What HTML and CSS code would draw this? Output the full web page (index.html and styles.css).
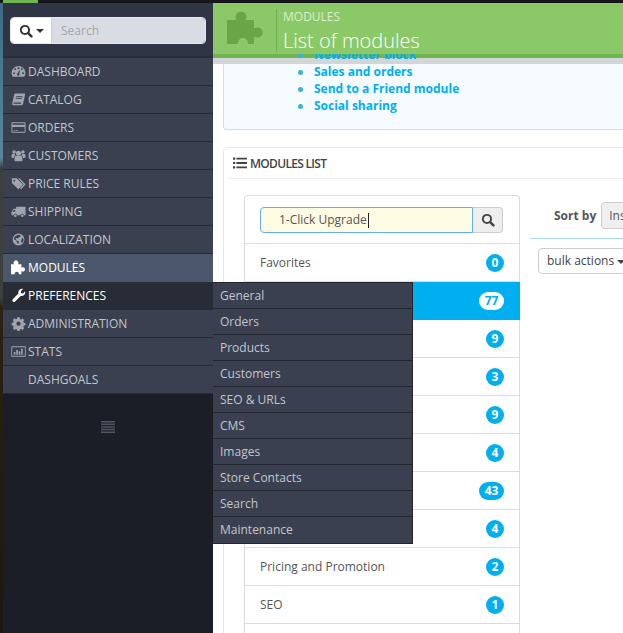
FILE: index.html
```html
<!DOCTYPE html>
<html lang="en">
<head>
    <meta charset="UTF-8">
    <meta name="viewport" content="width=device-width, initial-scale=1.0">
    <title>List of modules</title>
    <link rel="stylesheet" href="styles.css">
</head>
<body>
    <div class="topbar"><div class="topbar-green"></div></div>
    <div class="page">
        <div class="edge"></div>

        <nav class="sidebar">
            <div class="search-block">
                <div class="search-group">
                    <button class="search-type">
                        <svg class="search-icon" viewBox="0 0 16 16"><circle cx="6.8" cy="6.8" r="4.7" fill="none" stroke="currentColor" stroke-width="2.2"/><path d="M10.2 10.2l4 4" stroke="currentColor" stroke-width="2.8" stroke-linecap="round"/></svg>
                        <span class="caret"></span>
                    </button>
                    <div class="search-input">Search</div>
                </div>
            </div>

            <ul class="menu">
                <li class="menu-item">
                    <svg class="menu-icon" viewBox="0 0 16 16"><path fill-rule="evenodd" d="M8 2a7.4 7.4 0 0 0-7.4 7.4c0 1.5.4 2.9 1.2 4.1h12.4c.8-1.2 1.2-2.6 1.2-4.1A7.4 7.4 0 0 0 8 2zM7 3.6h2v1.8H7zM3.2 5.4l1.3-1.2 1.2 1.3-1.2 1.2zM2.2 9h1.9v1.7H2.2zM11.9 9h1.9v1.7h-1.9zM10.4 5.4l1.3-1.3 1.1 1.2-1.2 1.3zM7.2 9.8l1.6-3.2.8.3-.8 3.3a1.4 1.4 0 1 1-1.6-.4z"/></svg>
                    Dashboard
                </li>
                <li class="menu-item">
                    <svg class="menu-icon" viewBox="0 0 16 16"><path fill-rule="evenodd" d="M5 1.5h9.500c.5 0 .7.4.6.9l-2.200 10c-.2.9-.8 1.600-1.800 1.600H2.500C1.500 14 1 13.200 1.200 12.200L3.400 2.800C3.600 2 4.200 1.500 5 1.500zM5.600 4.200l-.2.9h6.800l.2-.9zM5.100 6.200l-.2.900h6.800l.2-.9zM3.200 11.300c-.4 0-.6.300-.6.600s.2.600.6.600h7.300l.3-1.200z"/></svg>
                    Catalog
                </li>
                <li class="menu-item">
                    <svg class="menu-icon" viewBox="0 0 16 16"><path fill-rule="evenodd" d="M1.200 2.500h13.600c.4 0 .7.300.7.700v9.600c0 .4-.3.700-.7.700H1.200a.7.700 0 0 1-.7-.7V3.200c0-.4.300-.7.700-.7zM1.500 3.500v1.600h13V3.500zM1.500 7.400v5.100h13V7.400zM2.800 10.700h2v.8h-2zM5.500 10.700h1.800v.8H5.500z"/></svg>
                    Orders
                </li>
                <li class="menu-item">
                    <svg class="menu-icon" viewBox="0 0 16 16"><circle cx="8" cy="5.500" r="2.700"/><circle cx="3.300" cy="4.300" r="1.900"/><circle cx="12.700" cy="4.300" r="1.900"/><path d="M3.800 13.800V10.400c0-1.300.8-2.200 2-2.200h4.400c1.200 0 2 .9 2 2.200v3.400c-1 .6-7.400.6-8.400 0z"/><path d="M.6 10.500V8c0-1 .6-1.600 1.500-1.600h1.700c.3.700.7 1.200 1.200 1.500-1.100.3-1.900 1.200-2 2.800zM15.400 10.500V8c0-1-.6-1.600-1.500-1.600h-1.700c-.3.700-.7 1.200-1.200 1.500 1.100.3 1.900 1.200 2 2.800z"/></svg>
                    Customers
                </li>
                <li class="menu-item">
                    <svg class="menu-icon" viewBox="0 0 16 16"><path fill-rule="evenodd" d="M1 2.500h5.200L12.800 9l-5 5L1 7.500zM3.500 4a1 1 0 1 0 0 2 1 1 0 0 0 0-2z"/><path d="M7.800 2.500h1.500L15.500 9l-4.800 5-1.100-1.100L13.500 9z"/></svg>
                    Price rules
                </li>
                <li class="menu-item">
                    <svg class="menu-icon" viewBox="0 0 16 16"><path fill-rule="evenodd" d="M5.500 3h9.300c.4 0 .7.300.7.700V12h-1.700a2 2 0 0 0-3.900 0H6.600a2 2 0 0 0-3.900 0H1.200a.7.700 0 0 1-.7-.7V8.500l2-3.100c.2-.3.500-.4.800-.4h2.200zM2.800 6.300L1.800 8.200h2.700V6.300z"/><circle cx="4.600" cy="12.500" r="1.400"/><circle cx="12" cy="12.500" r="1.400"/></svg>
                    Shipping
                </li>
                <li class="menu-item">
                    <svg class="menu-icon" viewBox="0 0 16 16"><path fill-rule="evenodd" d="M8 1.700a6.300 6.300 0 1 0 0 12.600A6.300 6.300 0 0 0 8 1.700zM6 3.400l2.600-.5 1.800 1-.6 1.500-1.700.4-.4 1.200-1.700-.7-1.300.8 1.600 2.500 2.100.3-.3 2.500-1.400-.3-1.300-3L3 7.600c.4-2 1.400-3.400 3-4.200zM11.700 6.500l1.400.5.400 1.800-.8 2-1.300.8-.6-2.100.4-1.300z"/></svg>
                    Localization
                </li>
                <li class="menu-item is-active">
                    <svg class="menu-icon" viewBox="2 2 36 36"><path d="M0 12H11V13.500A5.500 5.500 0 1 1 17 13.500V12H27V20H28.500A5 5 0 1 1 28.500 29H27V36H21V35A5 5 0 0 0 11 35V36H0Z"/></svg>
                    Modules
                </li>
                <li class="menu-item is-open">
                    <svg class="menu-icon" viewBox="0 0 16 16"><path d="M14.900 3.400c.5 1.400.2 3-.9 4-1 1-2.400 1.300-3.700 1L4.400 14.300a1.700 1.700 0 0 1-2.500-2.400l6-6C7.500 4.500 7.900 3 8.900 2c1.100-1 2.600-1.400 4-.9L10.500 3.500l.4 2 2 .4z"/></svg>
                    Preferences
                    <ul class="submenu">
                        <li class="submenu-item">General</li>
                        <li class="submenu-item">Orders</li>
                        <li class="submenu-item">Products</li>
                        <li class="submenu-item">Customers</li>
                        <li class="submenu-item">SEO &amp; URLs</li>
                        <li class="submenu-item">CMS</li>
                        <li class="submenu-item">Images</li>
                        <li class="submenu-item">Store Contacts</li>
                        <li class="submenu-item">Search</li>
                        <li class="submenu-item">Maintenance</li>
                    </ul>
                </li>
                <li class="menu-item">
                    <svg class="menu-icon" viewBox="0 0 16 16"><path fill-rule="evenodd" d="M6.800 1.800h2.400l.4 1.800 1.200.5 1.600-1 1.700 1.700-1 1.600.5 1.200 1.800.4v2.400l-1.800.4-.5 1.200 1 1.600-1.700 1.700-1.600-1-1.200.5-.4 1.800H6.800l-.4-1.800-1.200-.5-1.600 1-1.700-1.700 1-1.600-.5-1.200-1.800-.4V7.900l1.800-.4.5-1.200-1-1.600 1.700-1.700 1.600 1 1.200-.5zM8 6.400a2.300 2.300 0 1 0 0 4.600 2.300 2.300 0 0 0 0-4.600z" transform="translate(0 -.5)"/></svg>
                    Administration
                </li>
                <li class="menu-item">
                    <svg class="menu-icon" viewBox="0 0 16 16"><path fill-rule="evenodd" d="M1 2.500h14c.4 0 .7.300.7.700v9.600c0 .4-.3.700-.7.700H1a.7.700 0 0 1-.7-.7V3.200c0-.4.300-.7.700-.7zM1.200 3.400v9.200h13.600V3.400zM3 8.500h1.700v3H3zM5.600 6.500h1.700v5H5.600zM8.200 7.800h1.700v3.700H8.200zM10.800 5h1.700v6.500h-1.700z"/></svg>
                    Stats
                </li>
                <li class="menu-item">
                    <span class="menu-icon"></span>
                    Dashgoals
                </li>
            </ul>

            <div class="sidebar-foot">
                <svg class="collapse-icon" viewBox="0 0 14 12"><path d="M0 0h14v1.500H0zM0 2.600h14v1.500H0zM0 5.200h14v1.500H0zM0 7.800h14v1.500H0zM0 10.400h14v1.500H0z"/></svg>
            </div>
        </nav>

        <main class="main">
            <header class="title-bar">
                <svg class="title-icon" viewBox="0 0 40 40"><path d="M0 12H11V13.500A5.500 5.500 0 1 1 17 13.500V12H27V20H28.500A5 5 0 1 1 28.500 29H27V36H21V35A5 5 0 0 0 11 35V36H0Z"/></svg>
                <div class="title-text">
                    <div class="breadcrumb">MODULES</div>
                    <h1 class="page-title">List of modules</h1>
                </div>
            </header>
            <div class="title-shadow"></div>

            <div class="content">
                <div class="info-panel">
                    <ul class="info-list">
                        <li>Newsletter block</li>
                        <li>Sales and orders</li>
                        <li>Send to a Friend module</li>
                        <li>Social sharing</li>
                    </ul>
                </div>

                <section class="panel">
                    <h3 class="panel-heading">
                        <svg class="list-icon" viewBox="0 0 14 12"><path d="M0 .500h2.200v2.200H0zM0 4.900h2.200v2.200H0zM0 9.300h2.200v2.200H0zM3.400 .700H14v1.800H3.400zM3.400 5.100H14v1.800H3.400zM3.400 9.500H14v1.800H3.400z"/></svg>
                        Modules list
                    </h3>
                    <div class="panel-body">
                        <div class="categories">
                            <div class="filter-row">
                                <div class="filter-input">1-Click Upgrade<span class="cursor"></span></div>
                                <button class="filter-button">
                                    <svg class="filter-icon" viewBox="0 0 16 16"><circle cx="6.800" cy="6.800" r="4.700" fill="none" stroke="currentColor" stroke-width="2.200"/><path d="M10.200 10.200l4 4" stroke="currentColor" stroke-width="2.800" stroke-linecap="round"/></svg>
                                </button>
                            </div>
                            <div class="category"><span>Favorites</span><span class="badge">0</span></div>
                            <div class="category is-selected"><span class="badge badge-wide">77</span></div>
                            <div class="category"><span class="badge">9</span></div>
                            <div class="category"><span class="badge">3</span></div>
                            <div class="category"><span class="badge">9</span></div>
                            <div class="category"><span class="badge">4</span></div>
                            <div class="category"><span class="badge badge-wide">43</span></div>
                            <div class="category"><span class="badge">4</span></div>
                            <div class="category"><span>Pricing and Promotion</span><span class="badge">2</span></div>
                            <div class="category"><span>SEO</span><span class="badge">1</span></div>
                            <div class="category"></div>
                        </div>

                        <div class="module-list">
                            <div class="sort-row">
                                <span class="sort-label">Sort by</span>
                                <div class="sort-select">Installed</div>
                            </div>
                            <div class="bulk-button">bulk actions <span class="caret"></span></div>
                        </div>
                    </div>
                </section>
            </div>
        </main>
    </div>
</body>
</html>
```

FILE: styles.css
```css
* {
    box-sizing: border-box;
}
html, body {
    height: 100%;
}
body {
    display: flex;
    flex-direction: column;
    margin: 0;
    overflow: hidden;
    font-family: 'Open Sans', sans-serif;
    font-size: 12px;
    color: #555;
    background: #fff;
}
ul {
    list-style: none;
    margin: 0;
    padding: 0;
}
button {
    border: none;
    padding: 0;
    font: inherit;
}
.caret {
    display: inline-block;
    width: 0;
    height: 0;
    border-left: 4px solid transparent;
    border-right: 4px solid transparent;
    border-top: 4px solid currentColor;
    vertical-align: middle;
}

/* top of the window */
.topbar {
    flex: 0 0 3px;
    background: #15161a;
    padding-left: 3px;
}
.topbar-green {
    width: 35px;
    height: 3px;
    background: #6fb551;
}
.page {
    display: flex;
    flex: 1;
    min-height: 0;
}
.edge {
    flex: 0 0 3px;
    background: linear-gradient(to bottom, #3d6c84 0, #5a8797 155px, #3b403e 165px, #3b403e 295px, #2b2414 305px, #1a170f 100%);
}

/* sidebar */
.sidebar {
    display: flex;
    flex-direction: column;
    flex: 0 0 210px;
    background: #1b1e27;
}
.search-block {
    height: 55px;
    padding: 14px 7px 0;
    background: #2f3544;
    border-bottom: 2px solid #282d39;
}
.search-group {
    display: flex;
    height: 27px;
    border-radius: 4px;
    overflow: hidden;
    border: 1px solid #e4e6e9;
}
.search-type {
    display: flex;
    align-items: center;
    gap: 3px;
    width: 41px;
    padding-left: 8px;
    background: #fff;
    color: #333;
    border-right: 1px solid #ccd0d6;
}
.search-icon {
    width: 14px;
    height: 14px;
}
.search-input {
    flex: 1;
    padding-left: 9px;
    line-height: 25px;
    background: #d9dde3;
    color: #a2a6ad;
}
.menu-item {
    position: relative;
    display: flex;
    align-items: center;
    gap: 2px;
    height: 28px;
    padding-left: 8px;
    background: #3a4050;
    border-bottom: 1px solid #262b37;
    color: #c3c6cc;
    text-transform: uppercase;
}
.menu-icon {
    flex: 0 0 15px;
    width: 15px;
    height: 15px;
    fill: #a0a4ac;
}
.menu-item.is-active {
    background: #4b586c;
    color: #fff;
    border-bottom-color: #4b586c;
}
.menu-item.is-open {
    background: #282c37;
    color: #fff;
    border-bottom-color: #282c37;
}
.is-active .menu-icon,
.is-open .menu-icon {
    fill: #fff;
}
.submenu {
    position: absolute;
    top: 0;
    left: 100%;
    z-index: 5;
    width: 200px;
    background: #3a4050;
    border: 1px solid #22262f;
    border-left: none;
    text-transform: none;
}
.submenu-item {
    height: 26px;
    padding-left: 7px;
    line-height: 25px;
    color: #c3c6cc;
    border-bottom: 1px solid #22262f;
}
.submenu-item:last-child {
    border-bottom: none;
}
.sidebar-foot {
    flex: 1;
    padding-top: 26px;
    text-align: center;
}
.collapse-icon {
    width: 14px;
    height: 12px;
    fill: #4e5563;
}

/* green title */
.main {
    flex: 1;
    min-width: 0;
    overflow: hidden;
}
.title-bar {
    position: relative;
    z-index: 2;
    display: flex;
    height: 51px;
    padding-left: 14px;
    background: #8bc968;
}
.title-icon {
    flex: 0 0 40px;
    width: 40px;
    height: 40px;
    margin-top: 5px;
    fill: #6aa548;
}
.title-text {
    margin: 6px 0 0 9px;
    padding-left: 6px;
    border-left: 1px solid #71ae52;
    height: 42px;
}
.breadcrumb {
    font-size: 12px;
    line-height: 16px;
    color: #d9eecb;
}
.page-title {
    margin: 2px 0 0;
    font-size: 20px;
    font-weight: 300;
    line-height: 28px;
    color: #fff;
}
.title-shadow {
    height: 10px;
    background: linear-gradient(to bottom, #71b452 4px, #d3d5d7 4px);
}

/* info box under the title */
.content {
    padding-left: 10px;
    width: 620px;
}
.info-panel {
    display: flow-root;
    height: 66px;
    background: #f5fbff;
    border: 1px solid #c3e3f2;
    border-top: none;
    border-radius: 0 0 0 4px;
}
.info-list {
    position: relative;
    margin-top: -18px;
    padding-left: 90px;
    font-size: 12px;
    font-weight: 700;
    line-height: 17px;
    color: #00aff0;
}
.info-list li::before {
    content: "";
    display: inline-block;
    width: 5px;
    height: 5px;
    margin: 0 11px 0 -16px;
    border-radius: 50%;
    background: #35b3d8;
    vertical-align: middle;
}

/* modules panel */
.panel {
    margin-top: 17px;
    border: 1px solid #e4e6e8;
    border-radius: 5px 0 0 0;
    background: #fff;
}
.panel-heading {
    display: flex;
    align-items: center;
    gap: 3px;
    height: 31px;
    margin: 0 0 0 4px;
    padding-left: 5px;
    font-size: 12px;
    font-weight: 600;
    letter-spacing: -0.7px;
    text-transform: uppercase;
    color: #444;
    border-bottom: 1px solid #eee;
}
.list-icon {
    width: 14px;
    height: 12px;
    fill: #444;
}
.panel-body {
    display: flex;
    padding: 16px 0 0 20px;
}
.categories {
    flex: 0 0 276px;
    border: 1px solid #dcdcdc;
    border-bottom: none;
    border-radius: 4px 4px 0 0;
}
.filter-row {
    display: flex;
    height: 48px;
    padding: 11px 16px 0 15px;
    border-bottom: 1px solid #dcdcdc;
}
.filter-input {
    flex: 1;
    height: 26px;
    padding-left: 18px;
    line-height: 24px;
    background: #fdfbe3;
    border: 1px solid #66afe9;
    border-radius: 4px 0 0 4px;
    color: #555;
}
.cursor {
    display: inline-block;
    width: 1px;
    height: 15px;
    margin-left: 1px;
    background: #222;
    vertical-align: middle;
}
.filter-button {
    flex: 0 0 30px;
    height: 26px;
    background: #eee;
    border: 1px solid #ccc;
    border-left: none;
    border-radius: 0 4px 4px 0;
    color: #444;
}
.filter-icon {
    display: block;
    width: 14px;
    height: 14px;
    margin: 0 auto;
}
.category {
    display: flex;
    align-items: center;
    justify-content: space-between;
    height: 38px;
    padding: 0 15px;
    border-bottom: 1px solid #dcdcdc;
    color: #555;
}
.category.is-selected {
    margin: 0 -1px;
    padding: 0 16px;
    justify-content: flex-end;
    background: #00aff0;
    border-bottom-color: #00aff0;
}
.category .badge:only-child {
    margin-left: auto;
}
.badge {
    min-width: 18px;
    height: 18px;
    padding: 0 4px;
    border-radius: 9px;
    background: #00aff0;
    color: #fff;
    font-size: 12px;
    font-weight: 700;
    line-height: 18px;
    text-align: center;
}
.badge-wide {
    min-width: 25px;
}
.is-selected .badge {
    background: #fff;
    color: #00aff0;
}

/* right of the categories */
.module-list {
    flex: 1;
    margin-left: 10px;
}
.sort-row {
    display: flex;
    align-items: center;
    height: 44px;
    padding: 7px 0 9px 24px;
    border-bottom: 1px solid #a9d9ef;
}
.sort-label {
    font-weight: 700;
    color: #555;
}
.sort-select {
    height: 27px;
    margin-left: 5px;
    padding-left: 7px;
    width: 90px;
    line-height: 25px;
    background: #f0f0f0;
    border: 1px solid #ccc;
    border-radius: 4px;
    color: #555;
}
.bulk-button {
    display: inline-block;
    height: 26px;
    margin: 9px 0 0 8px;
    padding: 0 10px 0 8px;
    line-height: 24px;
    background: #fff;
    border: 1px solid #ccc;
    border-radius: 4px;
    color: #444;
}
```
